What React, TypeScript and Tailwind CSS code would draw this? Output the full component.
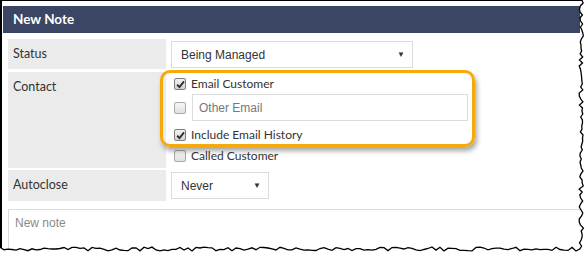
import React from 'react';

// jagged "torn paper" edge along the right and bottom of the capture
const tornPoints = () => {
  let seed = 11;
  const rnd = () => {
    seed = (seed * 9301 + 49297) % 233280;
    return seed / 233280;
  };
  const pts: [number, number][] = [];
  for (let y = 0; y <= 246; y += 3) pts.push([579 + rnd() * 4.5, y]);
  for (let x = 580; x >= 0; x -= 4) pts.push([x, 247 + rnd() * 4]);
  return pts;
};

const TornEdge = () => {
  const pts = tornPoints();
  const line = pts.map((p, i) => `${i ? 'L' : 'M'}${p[0].toFixed(1)} ${p[1].toFixed(1)}`).join(' ');
  return (
    <svg className="absolute inset-0 pointer-events-none" width="588" height="256" viewBox="0 0 588 256">
      <path d={`${line} L0 256 L588 256 L588 0 Z`} fill="#ffffff" />
      <path d={line} fill="none" stroke="#000" strokeWidth="1.3" />
    </svg>
  );
};

const Checkbox = ({ checked }: { checked?: boolean }) => (
  <span
    className={
      checked
        ? 'w-3 h-3 shrink-0 rounded-[2px] border border-[#7d7d7d] bg-linear-to-b from-[#f2f2f2] to-[#d2d2d2] flex items-center justify-center'
        : 'w-3 h-3 shrink-0 rounded-[2px] border border-[#a9a9a9] bg-linear-to-b from-[#f6f6f6] to-[#e0e0e0]'
    }
  >
    {checked && (
      <svg viewBox="0 0 10 10" className="w-[9px] h-[9px]">
        <path d="M1.3 5.3 L3.9 7.9 L8.9 1.6" stroke="#2e2e2e" strokeWidth="2.1" fill="none" />
      </svg>
    )}
  </span>
);

const Select = ({ value, width }: { value: string; width: string }) => (
  <div className={`${width} h-[27px] border border-[#dcdcdc] bg-white flex items-center justify-between pl-[9px] pr-[7px] font-['Liberation_Sans',Arial,sans-serif] text-[12px] text-[#333]`}>
    <span>{value}</span>
    <span className="text-[8px] text-[#333]">▼</span>
  </div>
);

const CheckRow = ({ label, checked }: { label: string; checked?: boolean }) => (
  <div className="flex items-center gap-[5px] pl-[3px]">
    <Checkbox checked={checked} />
    <span className="text-[12px] text-[#333]">{label}</span>
  </div>
);

export default function App() {
  return (
    <div className="relative w-[588px] h-[256px] bg-white overflow-hidden font-['Lato',sans-serif]">
      <div className="h-full border-l-2 border-t border-black pt-[5px]">
        <div className="ml-px w-[577px] h-[27px] bg-[#3b4564] flex items-center pl-[10px]">
          <span className="text-white font-bold text-[13.5px]">New Note</span>
        </div>

        <div className="pl-[6px] pt-[6px] flex flex-col">
          {/* Status */}
          <div className="flex gap-[5px] h-[30px]">
            <div className="w-[158px] bg-[#ebebeb] flex items-center pl-[5px] text-[12.5px] text-[#333]">Status</div>
            <div className="pt-[2px]">
              <Select value="Being Managed" width="w-[242px]" />
            </div>
          </div>

          {/* Contact */}
          <div className="flex gap-[5px] mt-[3px] h-[96px]">
            <div className="w-[158px] bg-[#ebebeb] pl-[5px] pt-[6px] text-[12.5px] text-[#333]">Contact</div>
            <div className="flex flex-col pt-[2px]">
              <div className="h-[20px] flex items-center">
                <CheckRow label="Email Customer" checked />
              </div>
              <div className="h-[27px] flex items-center gap-[6px] pl-[3px]">
                <Checkbox />
                <div className="w-[276px] h-[27px] border border-[#dcdcdc] flex items-center pl-[6px] font-['Liberation_Sans',Arial,sans-serif] text-[12px] text-[#777]">
                  Other Email
                </div>
              </div>
              <div className="h-[20px] mt-[4px] flex items-center">
                <CheckRow label="Include Email History" checked />
              </div>
              <div className="h-[21px] flex items-center">
                <CheckRow label="Called Customer" />
              </div>
            </div>
          </div>

          {/* Autoclose */}
          <div className="flex gap-[5px] mt-[2px] h-[31px]">
            <div className="w-[158px] bg-[#ebebeb] flex items-center pl-[5px] text-[12.5px] text-[#333]">Autoclose</div>
            <div className="pt-[2px]">
              <Select value="Never" width="w-[98px]" />
            </div>
          </div>

          {/* note */}
          <div className="mt-[8px] w-[580px] h-[60px] border border-[#dcdcdc] pl-[6px] pt-[4px] font-['Liberation_Sans',Arial,sans-serif] text-[12px] text-[#8a8a8a]">
            New note
          </div>
        </div>
      </div>

      {/* highlight drawn over the contact options */}
      <div className="absolute left-[160px] top-[70px] w-[315px] h-[77px] border-[3px] border-[#f6a90b] rounded-[10px] shadow-[2px_4px_5px_rgba(0,0,0,0.35)]" />

      <TornEdge />
    </div>
  );
}
